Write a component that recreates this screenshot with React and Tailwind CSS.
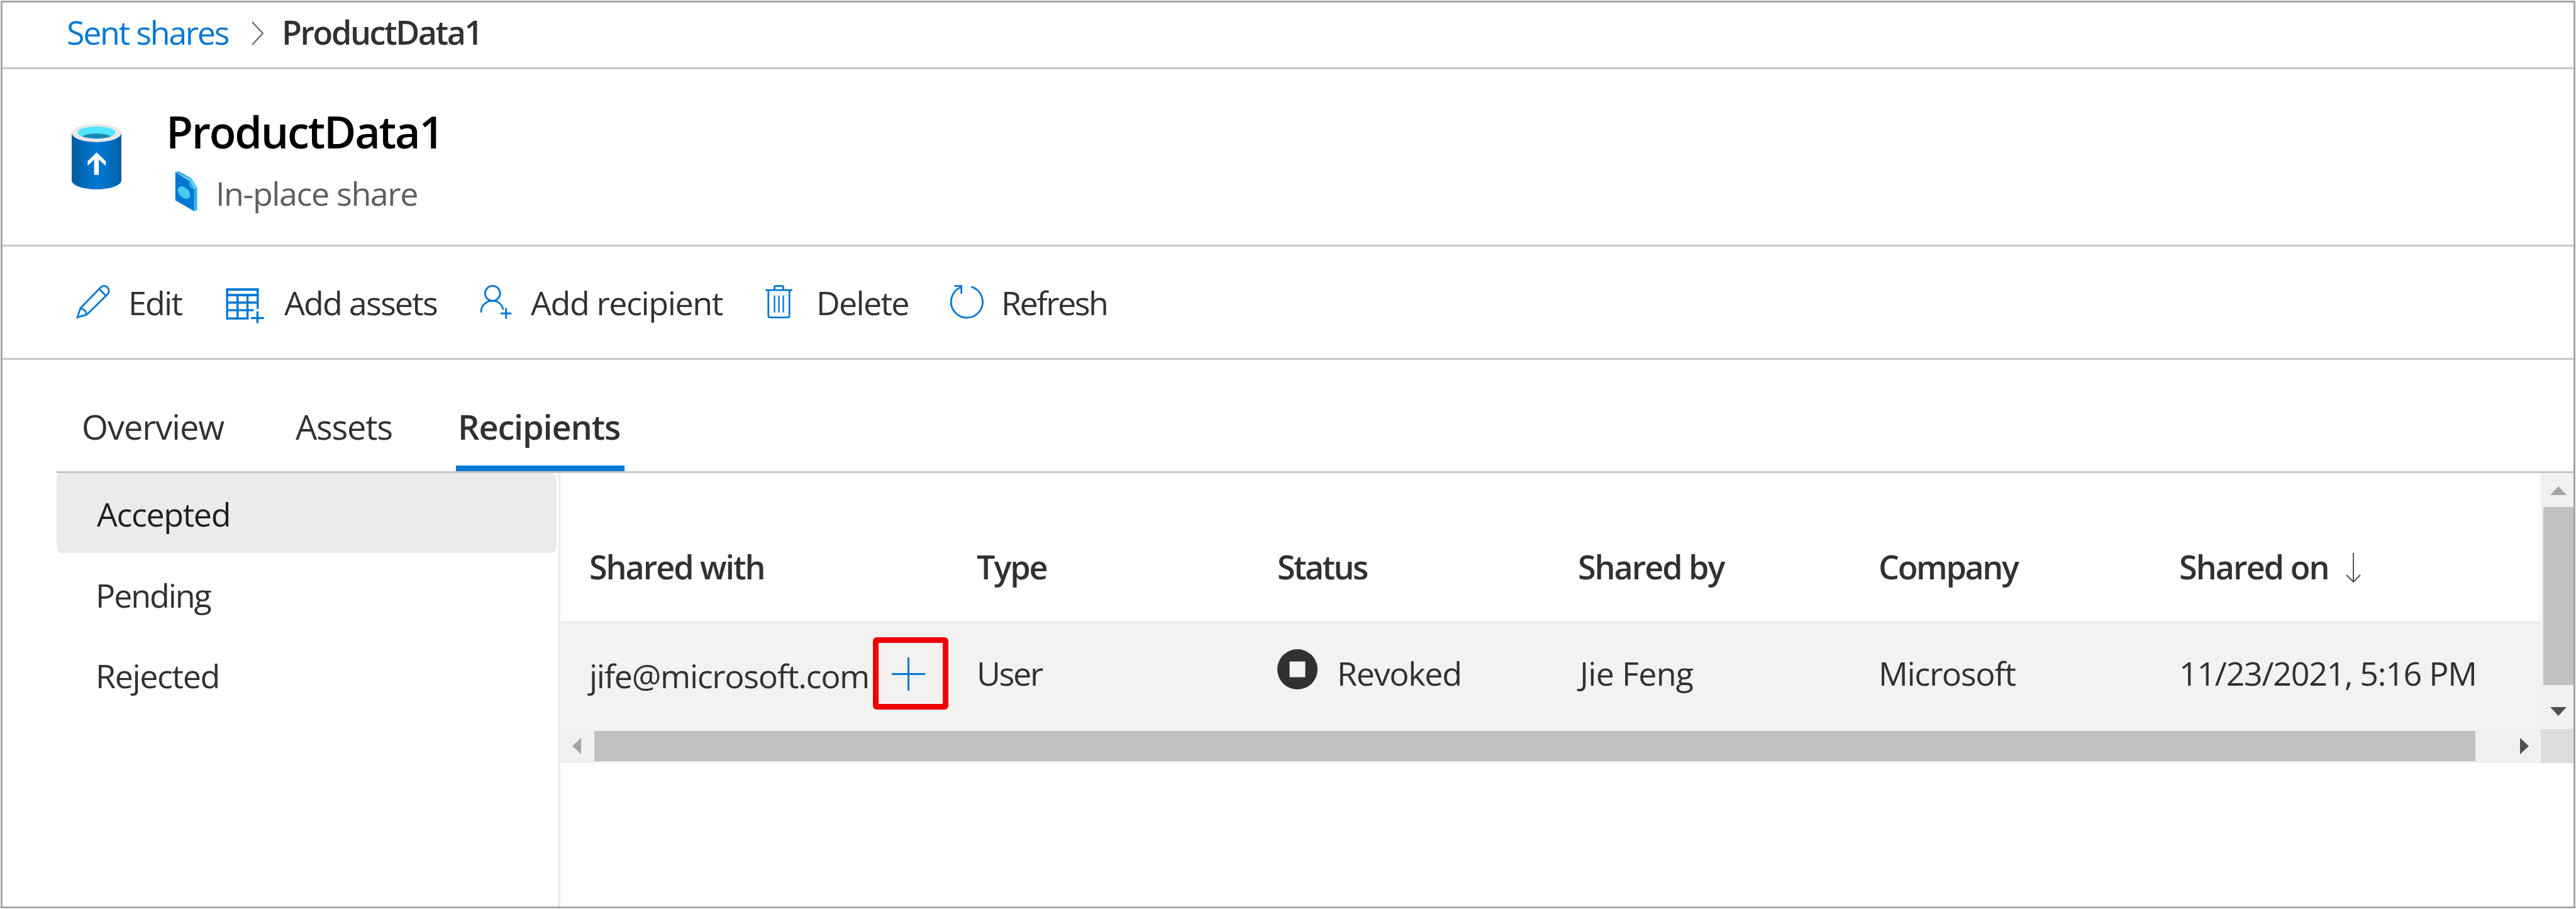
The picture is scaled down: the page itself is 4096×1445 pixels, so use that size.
import React from "react";

function Icon({ viewBox, className, children }) {
  return (
    <svg viewBox={viewBox} className={"shrink-0 overflow-visible " + className} fill="none" aria-hidden="true">
      {children}
    </svg>
  );
}

function StorageIcon() {
  return (
    <Icon viewBox="65 65 255 335" className="w-[79px] h-[104px] mt-[87px]">
      <defs>
        <linearGradient id="can" x1="0" x2="1" y1="0" y2="0">
          <stop offset="0" stopColor="#005ba1" />
          <stop offset="0.1" stopColor="#0060a9" />
          <stop offset="0.36" stopColor="#0071c8" />
          <stop offset="0.53" stopColor="#0078d4" />
          <stop offset="0.65" stopColor="#0074cd" />
          <stop offset="0.82" stopColor="#006abb" />
          <stop offset="1" stopColor="#005ba1" />
        </linearGradient>
      </defs>
      <path d="M65 111V354C65 379 121 400 192.500 400S320 379 320 354V111Z" fill="url(#can)" />
      <ellipse cx="192.500" cy="111.500" rx="127.500" ry="46.500" fill="#e8e8e8" />
      <ellipse cx="192.500" cy="108.500" rx="97" ry="31" fill="#50e6ff" />
      <path d="M192.500 114C163 114 136 119 118 128C136 135 163 139.500 192.500 139.500S249 135 267 128C249 119 222 114 192.500 114Z" fill="#198ab3" />
      <path d="M193 211L240 256V280L204 247V326H180V247L147 280V256Z" fill="#fff" />
    </Icon>
  );
}

function ShareFileIcon() {
  return (
    <Icon viewBox="598 310 116 208" className="w-[36px] h-[64px]">
      <path d="M600 316L617 310L685 348L713 398V511L700 517L698 400L672 352Z" fill="#32b0e7" />
      <path d="M600 316L672 358V382L698 404V517L600 461Z" fill="#0078d4" />
      <path d="M672 354L685 348L713 396L698 404L672 390Z" fill="#50d3f6" />
      <path d="M672 354L698 404L672 390Z" fill="#2aa7e3" />
      <ellipse cx="645" cy="421" rx="38" ry="25" transform="rotate(45 645 421)" fill="#46cbf2" />
    </Icon>
  );
}

function PencilIcon() {
  return (
    <Icon viewBox="28 36 174 172" className="w-[54px] h-[53px]">
      <g stroke="#0078d4" strokeWidth="9" strokeLinejoin="miter">
        <path d="M34 203L50 155L153 50C163 38 178 38 188 47C199 57 199 73 190 84L82 189Z" />
        <path d="M148 57L180 91M50 157C64 158 79 170 81 188" />
      </g>
    </Icon>
  );
}

function TableAddIcon() {
  return (
    <Icon viewBox="18 52 196 180" className="w-[61px] h-[56px]">
      <g stroke="#0078d4" strokeWidth="11">
        <path d="M135 207H25V59H181V158" />
        <path d="M25 88H181M25 126H181M25 165H161M78 88V207M129 88V207" />
        <path d="M147 205H213M180 171V231" />
      </g>
      <path d="M20 54H186V66H20ZM20 82H186V93H20Z" fill="#0078d4" />
    </Icon>
  );
}

function PersonAddIcon() {
  return (
    <Icon viewBox="32 36 164 174" className="w-[51px] h-[54px]">
      <g stroke="#0078d4" strokeWidth="9">
        <circle cx="97" cy="79" r="38.500" />
        <path d="M38 177C38 141 63 117 97 117C125 117 146 135 152 163" />
        <path d="M138 182H193M166 154V209" strokeWidth="9.500" />
      </g>
    </Icon>
  );
}

function TrashIcon() {
  return (
    <Icon viewBox="0 0 46 57" className="w-[43px] h-[53px]">
      <g stroke="#0078d4" strokeWidth="3">
        <path d="M0 8.700H46M15.500 8.700V3.500Q15.500 1.700 17.500 1.700H28.500Q30.500 1.700 30.500 3.500V8.700" />
        <path d="M5 8.700V52.500Q5 55.500 8 55.500H38Q41 55.500 41 52.500V8.700" />
        <path d="M15.500 18V47M23 18V47M30.500 18V47" strokeWidth="2.500" />
      </g>
    </Icon>
  );
}

function RefreshIcon() {
  return (
    <Icon viewBox="0 0 57 57" className="w-[53px] h-[53px]">
      <g stroke="#0078d4" strokeWidth="3">
        <path d="M37 3A27 27 0 1 1 19 4" />
        <path d="M8 1.700H20V15" />
      </g>
    </Icon>
  );
}

const COMMANDS = [
  { label: "Edit", icon: <PencilIcon />, button: "w-[238px]", slot: "w-[83px] pb-[3px]", text: "tracking-[-1.8px]" },
  { label: "Add assets", icon: <TableAddIcon />, button: "w-[404px]", slot: "w-[93px] pt-[9px]", text: "tracking-[-1.8px]" },
  { label: "Add recipient", icon: <PersonAddIcon />, button: "w-[454px]", slot: "w-[81px] pb-[3px]", text: "tracking-[-1.4px]" },
  { label: "Delete", icon: <TrashIcon />, button: "w-[293px]", slot: "w-[81px] pb-[3px]", text: "tracking-[-1.7px]" },
  { label: "Refresh", icon: <RefreshIcon />, button: "", slot: "w-[82px] pb-[3px]", text: "tracking-[-2.500px]" },
];

const COLS = "grid grid-cols-[616px_478px_478px_478px_478px_1fr] pl-[46px] whitespace-nowrap";

function Commands() {
  return (
    <div className="flex h-[180px] shrink-0 border-b-3 border-[#c6c6c4] pl-[117px] pt-[59px]">
      {COMMANDS.map((c) => (
        <button key={c.label} className={"flex h-[60px] items-center " + c.button}>
          <span className={"flex shrink-0 " + c.slot}>{c.icon}</span>
          <span className={"leading-[60px] whitespace-nowrap " + c.text}>{c.label}</span>
        </button>
      ))}
    </div>
  );
}

function Table() {
  return (
    <div className="flex flex-col w-[3149px] h-[407px]">
      <div className={COLS + " h-[239px] border-b-3 border-[#edebe9] pt-[119px] leading-[60px] font-semibold"}>
        <span className="tracking-[-2px]">Shared with</span>
        <span className="tracking-[-2px]">Type</span>
        <span className="tracking-[-2.600px]">Status</span>
        <span className="tracking-[-2px]">Shared by</span>
        <span className="tracking-[-2.300px]">Company</span>
        <span className="flex tracking-[-1.9px]">
          Shared on
          <Icon viewBox="0 0 24 48" className="w-[24px] h-[48px] ml-[27px] mt-[8px]">
            <path d="M12 0V46M1 35L12 46L23 35" stroke="#55534f" strokeWidth="2" />
          </Icon>
        </span>
      </div>
      <div className={COLS + " h-[168px] bg-[#f3f2f1] pt-[49px] leading-[60px] tracking-[-1.3px]"}>
        <span className="flex">
          <span className="mt-[4px]">jife@microsoft.com</span>
          <span className="relative mt-[5px] ml-[36px] w-[53px] h-[53px]">
            <Icon viewBox="0 0 53 53" className="w-[53px] h-[53px]">
              <path d="M0 26.500H53M26.500 0V53" stroke="#0078d4" strokeWidth="3" />
            </Icon>
            <span className="absolute left-[-30px] top-[-32px] w-[120px] h-[115px] rounded-[6px] border-[9px] border-[#ee0000]" />
          </span>
        </span>
        <span className="tracking-[-2.300px]">User</span>
        <span className="flex">
          <Icon viewBox="0 0 64 64" className="w-[64px] h-[64px] -mt-[8px] mr-[31px]">
            <circle cx="32" cy="32" r="32" fill="#323130" />
            <path d="M19.500 19.500H44.500V44.500H19.500Z" fill="#f3f2f1" />
          </Icon>
          Revoked
        </span>
        <span className="pl-[3px] tracking-[-0.7px]">Jie Feng</span>
        <span>Microsoft</span>
        <span>11/23/2021, 5:16 PM</span>
      </div>
    </div>
  );
}

function VerticalScrollbar() {
  return (
    <div className="flex flex-col items-end w-[52px] h-[407px] bg-[#f0f0f0]">
      <Icon viewBox="0 0 26 14" className="w-[26px] h-[14px] mt-[21px] mr-[11px]">
        <path d="M0 14L13 0L26 14Z" fill="#a3a3a3" />
      </Icon>
      <div className="w-[48px] h-[283px] mt-[19px] bg-[#c1c1c1]" />
      <Icon viewBox="0 0 26 14" className="w-[26px] h-[14px] mt-[35px] mr-[11px]">
        <path d="M0 0H26L13 14Z" fill="#505050" />
      </Icon>
    </div>
  );
}

function HorizontalScrollbar() {
  return (
    <div className="flex h-[54px]">
      <div className="flex items-center w-[3149px] bg-[#f0f0f0]">
        <Icon viewBox="0 0 14 26" className="w-[14px] h-[26px] ml-[19px] mr-[21px]">
          <path d="M14 0V26L0 13Z" fill="#a3a3a3" />
        </Icon>
        <div className="w-[2991px] h-[48px] bg-[#c1c1c1]" />
        <Icon viewBox="0 0 14 26" className="w-[14px] h-[26px] ml-[71px]">
          <path d="M0 0V26L14 13Z" fill="#505050" />
        </Icon>
      </div>
      <div className="w-[52px] bg-[#dcdcdc]" />
    </div>
  );
}

export default function App() {
  return (
    <div className="w-[4096px] h-[1445px] bg-white p-px overflow-hidden">
      <div className="flex flex-col w-full h-full border-3 border-[#a6a6a6] font-['Open_Sans',sans-serif] text-[52px] text-[#323130]">
        <nav className="flex h-[106px] shrink-0 border-b-3 border-[#c6c6c4] pl-[102px] pt-[17px] leading-[60px]">
          <a className="w-[294px] tracking-[-2.300px] text-[#0078d4]">Sent shares</a>
          <Icon viewBox="0 0 19 36" className="w-[19px] h-[36px] mt-[14px]">
            <path d="M1 0L18 18L1 36" stroke="#605e5c" strokeWidth="2" />
          </Icon>
          <span className="ml-[29px] tracking-[-2.400px] font-semibold">ProductData1</span>
        </nav>
        <header className="flex h-[282px] shrink-0 border-b-3 border-[#c6c6c4] pl-[110px]">
          <StorageIcon />
          <div className="pt-[54px] ml-[71px]">
            <h1 className="h-[90px] leading-[90px] text-[70px] tracking-[-2.200px] font-semibold text-black">ProductData1</h1>
            <div className="flex h-[60px] mt-[23px] leading-[60px] text-[#605e5c]">
              <div className="w-[79px] pl-[14px] -mt-[5px]">
                <ShareFileIcon />
              </div>
              <span className="tracking-[-1.4px]">In-place share</span>
            </div>
          </div>
        </header>
        <Commands />
        <main className="flex flex-col grow ml-[86px]">
          <div className="flex h-[180px] border-b-3 border-[#c6c6c4] text-[54px] leading-[60px]">
            <span className="w-[340px] pl-[40px] pt-[76px] tracking-[-1px]">Overview</span>
            <span className="w-[295px] pl-[40px] pt-[76px] tracking-[-1.2px]">Assets</span>
            <span className="w-[268px] pl-[3px] pt-[76px] tracking-[-1.1px] font-semibold border-b-9 border-[#0078d4]">Recipients</span>
          </div>
          <div className="flex grow">
            <ul className="w-[798px]">
              <li className="w-[795px] h-[127px] pl-[64px] pt-[35px] leading-[60px] tracking-[-1.4px] rounded-[8px] bg-[#edebe9] text-[#201f1e]">Accepted</li>
              <li className="h-[128px] pl-[62px] pt-[37px] leading-[60px] tracking-[-2.100px]">Pending</li>
              <li className="h-[128px] pl-[62px] pt-[37px] leading-[60px] tracking-[-1.4px]">Rejected</li>
            </ul>
            <div className="grow border-l-3 border-[#edebe9]">
              <div className="flex">
                <Table />
                <VerticalScrollbar />
              </div>
              <HorizontalScrollbar />
            </div>
          </div>
        </main>
      </div>
    </div>
  );
}
